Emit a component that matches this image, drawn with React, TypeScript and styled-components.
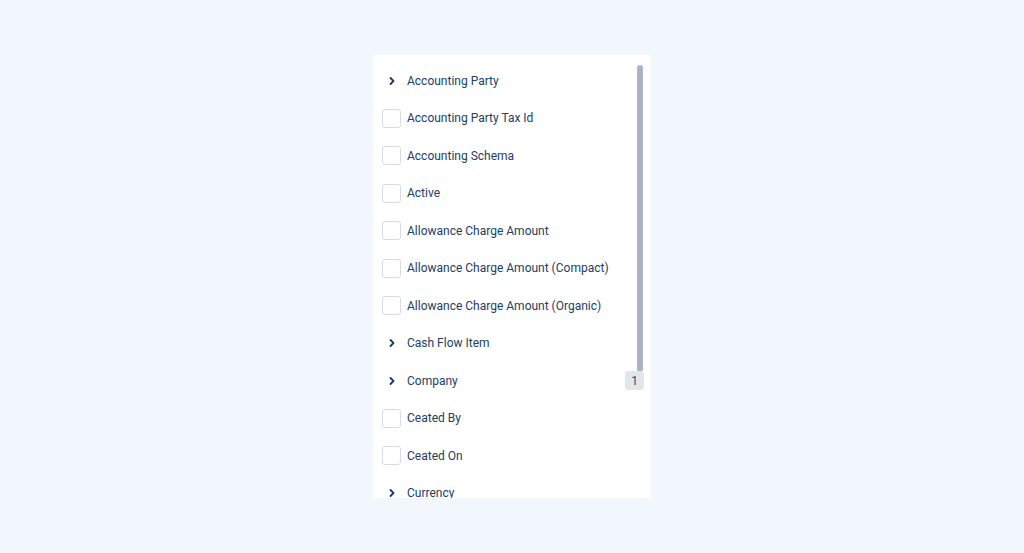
import React from "react";
import styled, { createGlobalStyle } from "styled-components";

const Global = createGlobalStyle`
  html, body { margin: 0; padding: 0; }
  body { background: #f2f7fd; font-family: Roboto, "Noto Sans", sans-serif; }
`;

const Page = styled.div`
  width: 1024px;
  height: 553px;
  display: flex;
  justify-content: center;
  padding-top: 55px;
  box-sizing: border-box;
`;

const Panel = styled.div`
  position: relative;
  width: 278px;
  height: 443px;
  background: #ffffff;
  border-radius: 4px 4px 0 0;
  overflow: hidden;
  box-sizing: border-box;
  padding: 7px 7px 0 9px;
`;

const List = styled.div`
  display: flex;
  flex-direction: column;
`;

const Row = styled.div`
  height: 37.5px;
  display: flex;
  align-items: center;
  gap: 6px;
  color: #22405f;
  font-size: 12px;
`;

const Box = styled.span`
  width: 19px;
  height: 19px;
  border: 1px solid #d6dce3;
  border-radius: 3px;
  box-sizing: border-box;
  flex: none;
  background: #fff;
`;

const Chevron = styled.span`
  width: 19px;
  height: 19px;
  flex: none;
  display: flex;
  align-items: center;
  justify-content: center;
`;

const Label = styled.span`
  flex: 1;
  line-height: 16px;
`;

const Badge = styled.span`
  position: relative;
  z-index: 2;
  min-width: 19px;
  height: 19px;
  border-radius: 3px;
  background: #e1e6ec;
  color: #3a4a5e;
  font-size: 12px;
  display: flex;
  align-items: center;
  justify-content: center;
`;

const Thumb = styled.div`
  position: absolute;
  right: 8px;
  top: 10px;
  width: 6px;
  height: 307px;
  border-radius: 3px;
  background: #aab4c3;
  z-index: 1;
`;

type Item = { label: string; group?: boolean; count?: number };

const items: Item[] = [
  { label: "Accounting Party", group: true },
  { label: "Accounting Party Tax Id" },
  { label: "Accounting Schema" },
  { label: "Active" },
  { label: "Allowance Charge Amount" },
  { label: "Allowance Charge Amount (Compact)" },
  { label: "Allowance Charge Amount (Organic)" },
  { label: "Cash Flow Item", group: true },
  { label: "Company", group: true, count: 1 },
  { label: "Ceated By" },
  { label: "Ceated On" },
  { label: "Currency", group: true },
];

const ChevronIcon = () => (
  <svg width="8" height="10" viewBox="0 0 8 10">
    <path d="M2.5 2 L5.5 5 L2.5 8" fill="none" stroke="#1d3a5c" strokeWidth="1.8" strokeLinecap="round" strokeLinejoin="round" />
  </svg>
);

export default function App() {
  return (
    <>
      <Global />
      <Page>
        <Panel>
          <Thumb />
          <List>
            {items.map((it) => (
              <Row key={it.label}>
                {it.group ? (
                  <Chevron>
                    <ChevronIcon />
                  </Chevron>
                ) : (
                  <Box />
                )}
                <Label>{it.label}</Label>
                {it.count ? <Badge>{it.count}</Badge> : null}
              </Row>
            ))}
          </List>
        </Panel>
      </Page>
    </>
  );
}
